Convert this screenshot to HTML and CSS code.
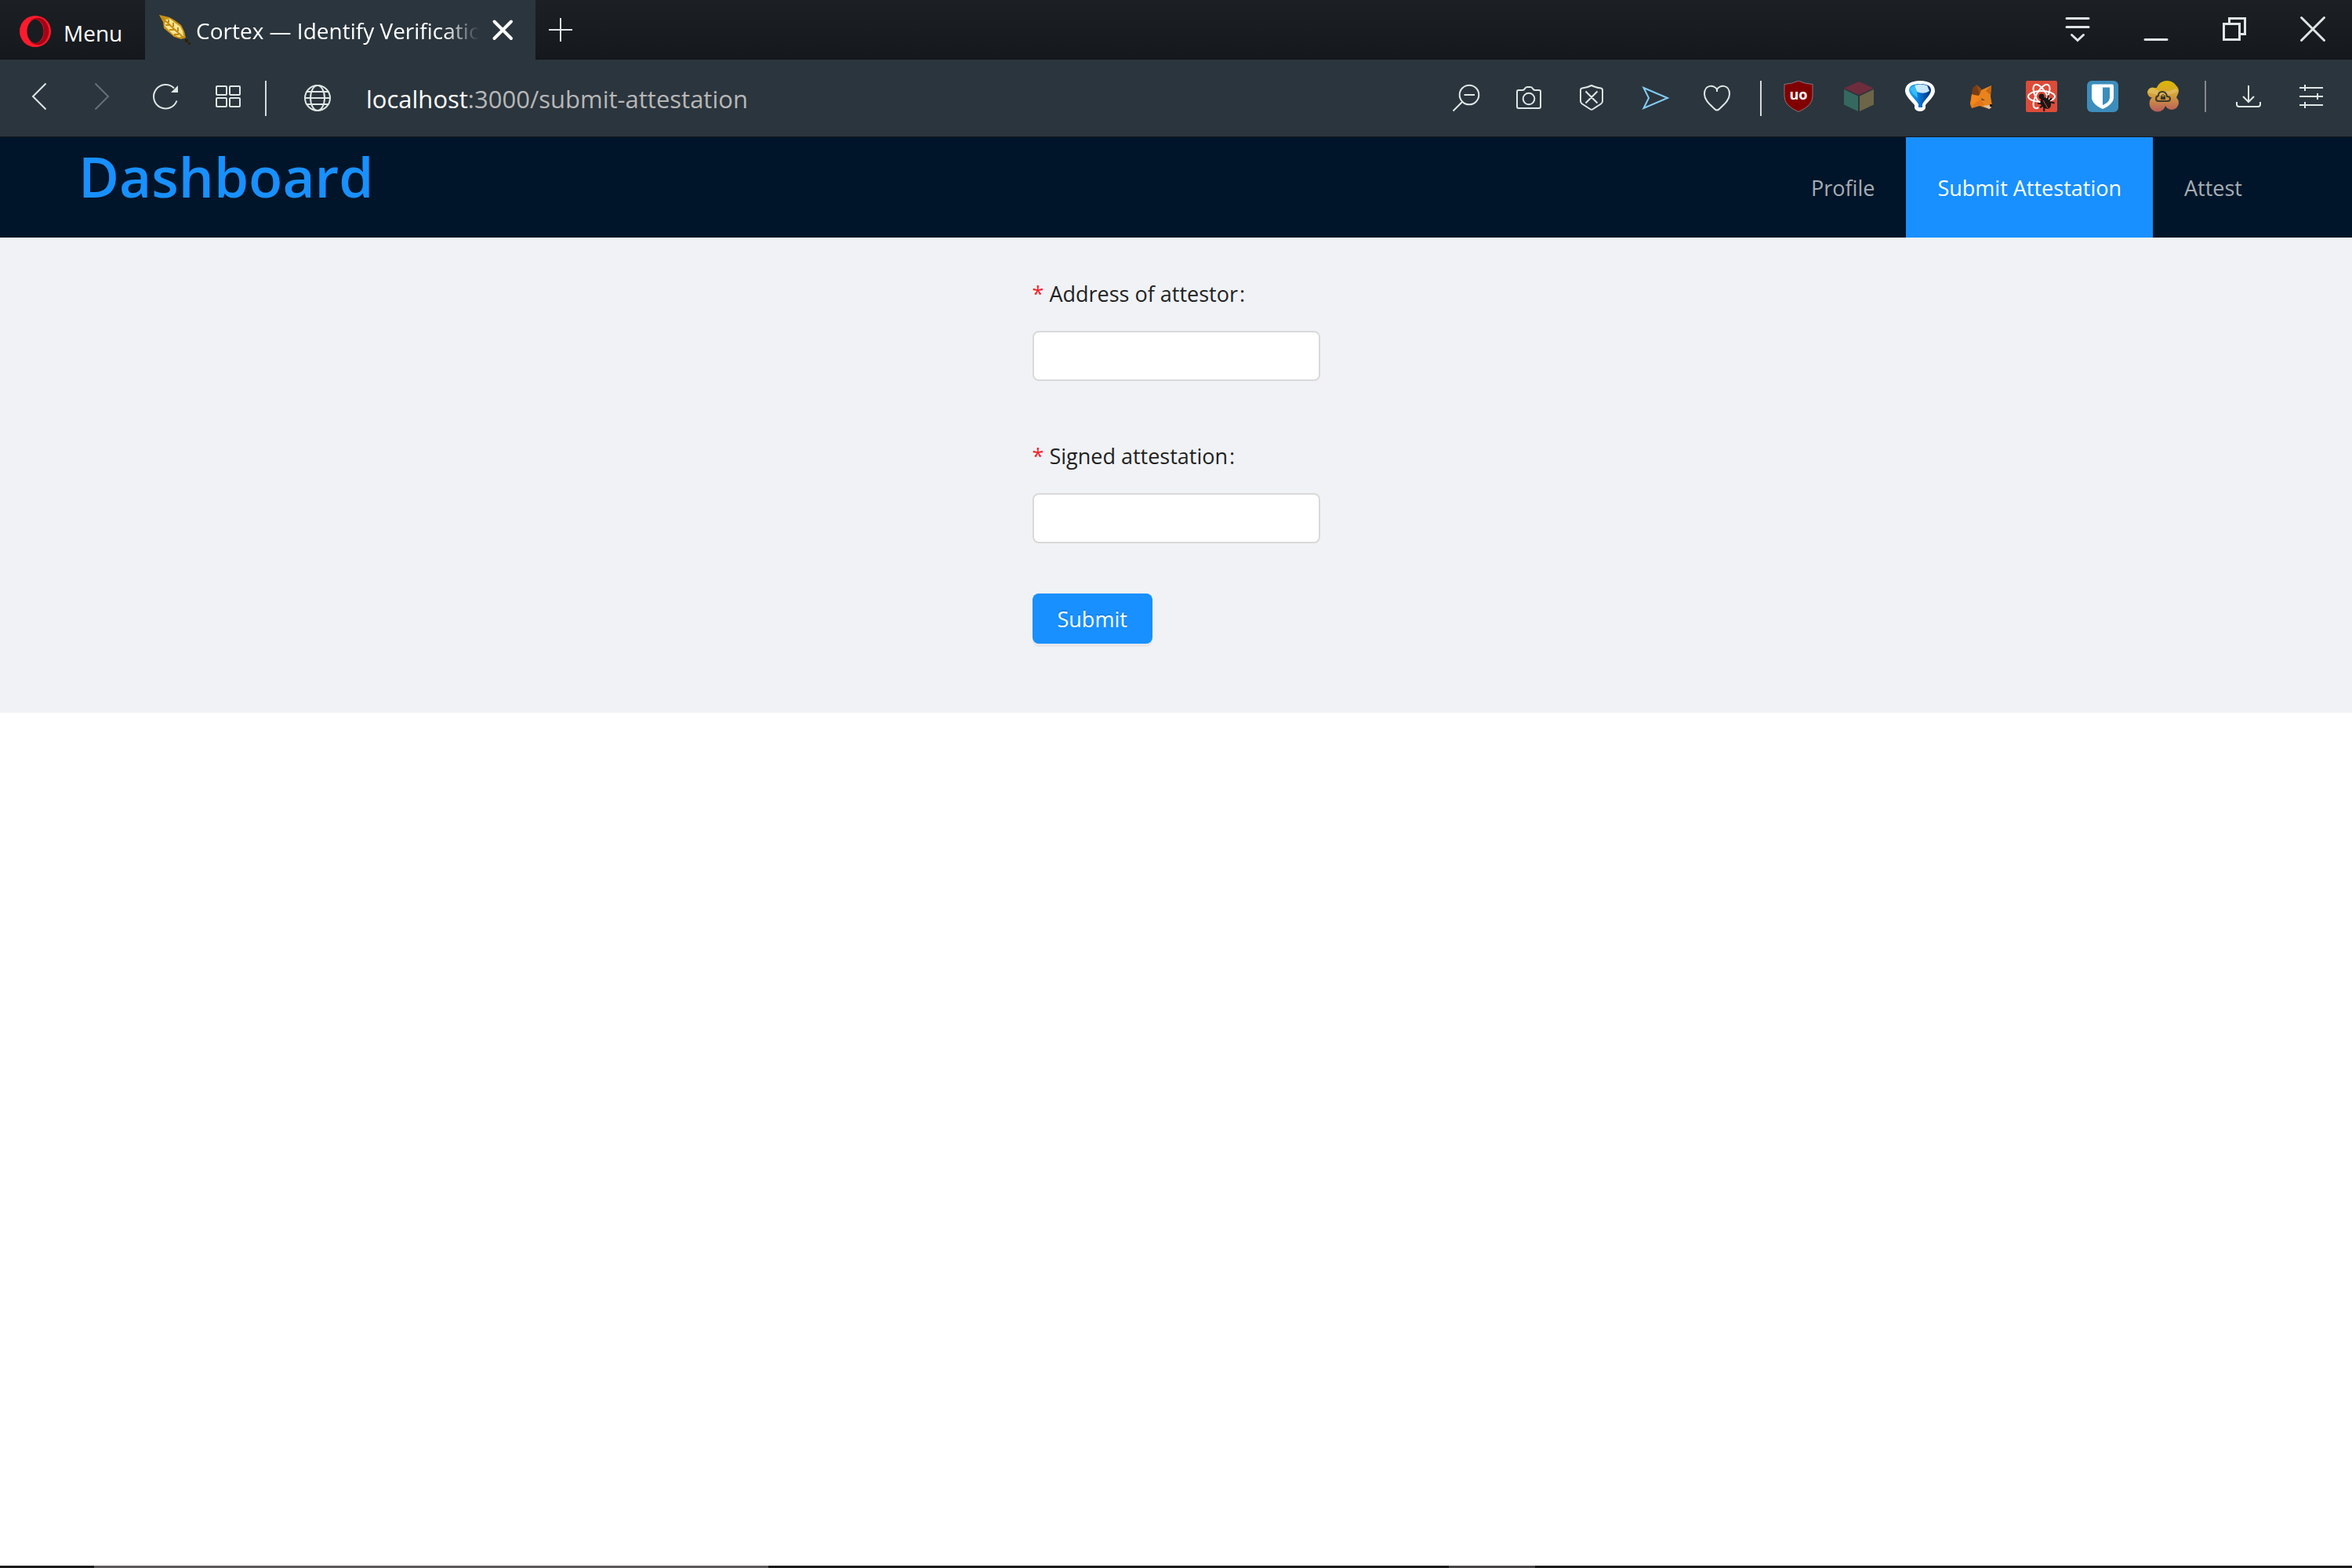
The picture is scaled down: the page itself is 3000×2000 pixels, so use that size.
FILE: index.html
```html
<!DOCTYPE html>
<html lang="en">
<head>
  <meta charset="UTF-8" />
  <meta name="viewport" content="width=device-width, initial-scale=1.0"/>
  <title>Cortex — Identify Verification</title>
  <link rel="stylesheet" href="styles.css">
</head>
<body>

  <!-- tabs -->
  <div class="tabbar">
    <button class="menu">
      <svg class="icon" viewBox="0 0 40 40"><circle cx="20" cy="20" r="20" fill="#ff1b2d"/><path d="M13 7C17 3 24 1 30 4.500A20 20 0 0 1 30 35.500C24 39 17 37 13 33C25 39 31 30 31 20S25 1 13 7Z" fill="#a70014"/><ellipse cx="20" cy="20" rx="10.500" ry="15" fill="#191c20"/></svg>
      <span>Menu</span>
    </button>
    <div class="tab">
      <svg class="icon" viewBox="0 0 40 40"><path d="M0 0L13 3L20 7L28 13L32 21L34 29L28 31L19 28L12 22L6 17L5 9Z" fill="#c99416"/><path d="M8 6L14 5L20 10L27 15L30 21L31 28L25 28L18 25L11 18L7 14Z" fill="#fbe591"/><path d="M2 2L32 30M12 10V6M18 15V10M24 21V16M13 13H8M19 19H13M25 25H19" stroke="#c08a14" stroke-width="2" fill="none"/><path d="M33 31h4v4h-4zM37 35h3v3h-3z" fill="#2b220c"/></svg>
      <span class="title">Cortex — Identify Verification</span>
      <button class="close" aria-label="Close tab"><svg class="icon" viewBox="0 0 40 40"><path d="M9.500 8.500L31 30M31 8.500L9.500 30" stroke-width="4" stroke-linecap="round"/></svg></button>
    </div>
    <button class="new" aria-label="New tab"><svg class="icon" viewBox="0 0 40 40"><path d="M20 3V33M5 18H35"/></svg></button>
    <div class="window">
      <button aria-label="Tab menu"><svg class="icon" viewBox="0 0 40 40"><path d="M6 4.500H34M6 15.500H34M12.500 25.500L20 32.500L27.500 25.500" stroke-width="3" stroke-linecap="round"/></svg></button>
      <button aria-label="Minimize"><svg class="icon" viewBox="0 0 40 40"><path d="M6 31.500H34" stroke-width="3" stroke-linecap="round"/></svg></button>
      <button aria-label="Restore"><svg class="icon" viewBox="0 0 40 40"><path d="M6.500 11.500H26.500V31.500H6.500ZM13.500 11V4.500H33.500V24.500H27" stroke-width="3"/></svg></button>
      <button aria-label="Close"><svg class="icon" viewBox="0 0 40 40"><path d="M5.500 3.500L34.500 32.500M34.500 3.500L5.500 32.500" stroke-width="3" stroke-linecap="round"/></svg></button>
    </div>
  </div>

  <!-- address bar -->
  <div class="toolbar">
    <div class="tools">
      <button aria-label="Back"><svg class="icon" viewBox="0 0 40 40"><path d="M28.500 3.500L12 20L28.500 36.500"/></svg></button>
      <button aria-label="Forward" class="off"><svg class="icon" viewBox="0 0 40 40"><path d="M11.500 3.500L28 20L11.500 36.500"/></svg></button>
      <button aria-label="Reload"><svg class="icon" viewBox="0 0 40 40"><path d="M35.500 25.500A15.200 15.200 0 1 1 32 9.500"/><path d="M37 6V15H28Z" fill="#dfe6e6" stroke="none"/></svg></button>
      <button aria-label="Speed dial"><svg class="icon" viewBox="0 0 40 40"><rect x="6" y="7" width="13" height="11" rx="1"/><rect x="23" y="7" width="13" height="11" rx="1"/><rect x="6" y="22" width="13" height="11" rx="1"/><rect x="23" y="22" width="13" height="11" rx="1"/></svg></button>
    </div>
    <div class="line"></div>
    <div class="address">
      <svg class="icon" viewBox="0 0 40 40"><circle cx="20" cy="22" r="16"/><ellipse cx="20" cy="22" rx="9" ry="16"/><path d="M6 14H34M4 22H36M6 30H34"/></svg>
      <div class="url">localhost<span>:3000/submit-attestation</span></div>
    </div>
    <div class="tools page">
      <button aria-label="Zoom out"><svg class="icon" viewBox="0 0 40 40"><circle cx="24" cy="18" r="12.300"/><path d="M17.500 18H31M15 27L3.500 38.500"/></svg></button>
      <button aria-label="Snapshot"><svg class="icon" viewBox="0 0 40 40"><path d="M5 14Q5 12 7 12H12Q14 12 15 10Q16 8 18 8H22Q24 8 25 10Q26 12 28 12H33Q35 12 35 14V33Q35 35 33 35H7Q5 35 5 33Z"/><circle cx="20" cy="23" r="7.300"/></svg></button>
      <button aria-label="Ad blocker"><svg class="icon" viewBox="0 0 40 40"><path d="M20 6Q26 9 32 9.500Q34 10 34 12V26Q34 28 32 29.500L22 36Q20 37.500 18 36L8 29.500Q6 28 6 26V12Q6 10 8 9.500Q14 9 20 6ZM12.500 13.500L27.500 28.500M27.500 13.500L12.500 28.500"/></svg></button>
      <button aria-label="My Flow" class="flow"><svg class="icon" viewBox="0 0 40 40"><path d="M6.500 9L37 22L6.500 35L13 22Z"/></svg></button>
      <button aria-label="Bookmark"><svg class="icon" viewBox="0 0 40 40"><path d="M20 14V11C17 5 4 4 4 17C4 25 12 31 17 36Q20 39 23 36C28 31 36 25 36 17C36 4 23 5 20 11"/></svg></button>
    </div>
    <div class="line"></div>
    <div class="extensions">
      <button aria-label="uBlock Origin"><svg class="icon" viewBox="0 0 40 40"><path d="M20 0Q28 4 38 4.500V20Q38 32 20 39.500Q2 32 2 20V4.500Q12 4 20 0Z" fill="#800000" stroke="#8b7378" stroke-width="1"/><text x="20" y="24" class="ublock">uo</text></svg></button>
      <button aria-label="Cube"><svg class="icon solid" viewBox="0 0 40 40"><path d="M20 1L39 9.500L20 18L1 9.500Z" fill="#6e2d3d"/><path d="M1 11L19 19.500V39L1 30.500Z" fill="#35695f"/><path d="M21 19.500L39 11V30.500L21 39Z" fill="#6d6548"/></svg></button>
      <button aria-label="VPN"><svg class="icon solid" viewBox="0 0 40 40"><defs><linearGradient id="cone"><stop offset="0" stop-color="#1fa8f5"/><stop offset=".35" stop-color="#0b86e8"/><stop offset="1" stop-color="#002d77"/></linearGradient></defs><path d="M20 0C32 0 39 5 39 13C39 19 31 26 27 31V35Q25 39 20 39Q15 39 13 35V31C9 26 1 19 1 13C1 5 8 0 20 0Z" fill="#fff"/><path d="M6 12C6 6 12 4 20 4S34 6 34 12C34 18 26 24 23 30V34H18V30C15 24 6 18 6 12Z" fill="url(#cone)"/><path d="M13 6Q20 3 29 6L32 13Q25 18 16 14Z" fill="#c9e8fc"/><path d="M7 10L13 6L16 14L17 22Q10 17 7 10Z" fill="#39bbf8"/></svg></button>
      <button aria-label="MetaMask"><svg class="icon solid" viewBox="0 0 40 40"><path d="M8 17L14 14L22 11L33 6L32 20L34 32L31 36L24 34L18 32L8 35L6 30Z" fill="#e8831d"/><path d="M8 17L9 9L14 5L20 12L17 19L11 18Z" fill="#763d16"/><path d="M14 5L20 10L18 17Z" fill="#9c4d14"/><path d="M33 6L26 13L32 18Z" fill="#c7650c"/><path d="M8 18L18 20L12 29L6 30Z" fill="#f6851b"/><path d="M12 29L20 24L24 32L18 31L8 35Z" fill="#e2761b"/><path d="M20 22L25 25L21 25Z" fill="#54443a"/><path d="M22 32L31 31L33 34L30 36Z" fill="#d7c1b3"/><path d="M31 30H34V33H31Z" fill="#161616"/></svg></button>
      <button aria-label="React Developer Tools"><svg class="icon" viewBox="0 0 40 40"><rect width="40" height="40" rx="2" fill="#dd4b39" stroke="none"/><g stroke="#fff"><ellipse cx="20" cy="20" rx="17" ry="7"/><ellipse cx="20" cy="20" rx="17" ry="7" transform="rotate(60 20 20)"/><ellipse cx="20" cy="20" rx="17" ry="7" transform="rotate(120 20 20)"/></g><path d="M15 31L31 26L34 36H17Z" fill="#dd4b39" stroke="none"/><g stroke="#1b1616" transform="rotate(-38 24 27)"><path d="M16 23L19 26H30L33 23M15 29H34M16 36L19 32H30L33 36"/><ellipse cx="24" cy="29" rx="5" ry="7" fill="#1b1616"/></g><circle cx="20" cy="20" r="3.500" fill="#1b1616" stroke="none"/><path d="M22 25L28 35" stroke="#dd4b39" stroke-width="1"/></svg></button>
      <button aria-label="Bitwarden"><svg class="icon solid" viewBox="0 0 40 40"><rect width="40" height="40" rx="6" fill="#3c8dbc"/><path d="M8 4.500H32Q34 4.500 34 6.500V21C34 28 27 33 20 36C13 33 6 28 6 21V6.500Q6 4.500 8 4.500Z" fill="#fff"/><path d="M20 8.500H29V21C29 26 25 29 20 31Z" fill="#3c8dbc"/></svg></button>
      <button aria-label="Cloud lock"><svg class="icon" viewBox="0 0 40 40"><defs><linearGradient id="cloud" x1="0" y1="0" x2="0" y2="40" gradientUnits="userSpaceOnUse"><stop offset="0" stop-color="#dcb800"/><stop offset=".45" stop-color="#d5a13b"/><stop offset="1" stop-color="#b75a5c"/></linearGradient></defs><g fill="url(#cloud)" stroke="none"><circle cx="25" cy="14" r="14"/><circle cx="6.500" cy="15" r="6.500"/><circle cx="13" cy="29" r="10.500"/><circle cx="31" cy="28" r="9"/><circle cx="32" cy="13" r="8"/><rect x="7" y="9" width="27" height="21"/></g><path d="M1 15Q20 22 39 14Q38 8 33 11Q20 18 7 9Q1 9 1 15Z" fill="#fff" opacity=".2" stroke="none"/><path d="M14 26H26Q29 26 29 23T25 20Q24 14 19 14T14 19Q11 20 11 23T14 26Z" stroke="#3b3a28"/><path d="M18 20V19Q20 16 22 19V20" stroke="#3b3a28" stroke-width="1"/><rect x="17" y="20" width="6" height="4" fill="#3b3a28" stroke="none"/></svg></button>
    </div>
    <div class="line short"></div>
    <div class="tools">
      <button aria-label="Downloads"><svg class="icon" viewBox="0 0 40 40"><path d="M20 6V26M13 20L20 27L27 20M5 27V30Q5 33 8 33H32Q35 33 35 30V27"/></svg></button>
      <button aria-label="Easy setup"><svg class="icon" viewBox="0 0 40 40"><path d="M5 9H35M5 20H35M5 31H35M12 5V13M28 16V24M12 27V35"/></svg></button>
    </div>
  </div>

  <!-- app -->
  <header class="header">
    <h1>Dashboard</h1>
    <nav class="nav">
      <a href="#profile">Profile</a>
      <a href="#submit" class="selected">Submit Attestation</a>
      <a href="#attest">Attest</a>
    </nav>
  </header>

  <main class="content">
    <form class="form">
      <label for="attestor">Address of attestor</label>
      <input type="text" id="attestor" />
      <label for="attestation">Signed attestation</label>
      <input type="text" id="attestation" />
      <button type="button" class="submit">Submit</button>
    </form>
  </main>

  <!-- top edge of the taskbar -->
  <footer class="taskbar">
    <div class="search"></div>
    <div class="running"></div>
  </footer>

</body>
</html>
```
FILE: styles.css
```css
* {
  box-sizing: border-box;
}

body {
  margin: 0;
  min-height: 100vh;
  display: flex;
  flex-direction: column;
  background-color: #fff;
  font-family: "Open Sans", "Noto Sans", sans-serif;
  font-size: 27px;
}

button {
  padding: 0;
  border: none;
  background: none;
  font: inherit;
  color: #fff;
  cursor: pointer;
}

.icon {
  display: block;
  flex: none;
  width: 40px;
  height: 40px;
  fill: none;
  stroke: #dfe6e6;
  stroke-width: 2;
}

.solid, .menu .icon, .tab > .icon {
  stroke: none;
}

.tabbar {
  display: flex;
  height: 76px;
  background: linear-gradient(#1c2024, #15181c);
  border-bottom: 1px solid #101316;
  font-size: 28px;
}

.menu {
  display: flex;
  align-items: center;
  gap: 16px;
  width: 185px;
  padding: 4px 0 0 25px;
}

.menu span {
  padding-top: 4px;
}

.tab {
  display: flex;
  align-items: center;
  width: 498px;
  height: 76px;
  padding: 2px 22px 0 18px;
  background-color: #2b353d;
  color: #fff;
}

.title {
  flex: 1;
  margin-left: 7px;
  overflow: hidden;
  white-space: nowrap;
  -webkit-mask-image: linear-gradient(90deg, #000 88%, transparent);
  mask-image: linear-gradient(90deg, #000 88%, transparent);
}

.close {
  margin-left: 10px;
}

.close .icon {
  stroke: #fff;
}

.new {
  width: 64px;
  padding: 4px 0 0 12px;
}

.window {
  display: flex;
  margin-left: auto;
  padding-top: 2px;
}

.window button {
  width: 100px;
}

.window .icon {
  margin: 0 auto;
}

.toolbar {
  display: flex;
  height: 99px;
  padding: 27px 12px 0 10px;
  background-color: #2b353d;
  border-bottom: 1px solid #14181b;
}

.tools {
  display: flex;
}

.tools.page {
  padding-right: 7px;
}

.tools button {
  width: 80px;
  height: 40px;
}

.tools .icon {
  margin: 0 auto;
}

.off .icon {
  stroke: #667077;
}

.flow .icon {
  stroke: #84ccf5;
}

.line {
  width: 2px;
  height: 45px;
  margin: 0 8px;
  background-color: #d5dada;
}

.line.short {
  height: 40px;
  margin: 0 14px;
  background-color: #84898c;
}

.address {
  flex: 1;
  display: flex;
  gap: 42px;
  padding-left: 37px;
}

.url {
  font-size: 31px;
  line-height: 46px;
  color: #fff;
}

.url span {
  color: #b7b7b7;
}

.extensions {
  display: flex;
  width: 543px;
  height: 40px;
}

.extensions button {
  flex: 1;
}

.extensions .icon {
  margin: 0 auto;
}

.ublock {
  font-size: 18px;
  font-weight: bold;
  fill: #fff;
  stroke: none;
  text-anchor: middle;
}

.header {
  display: flex;
  justify-content: space-between;
  height: 128px;
  padding: 0 100px;
  background-color: #001529;
}

h1 {
  margin: 0;
  font-size: 71px;
  line-height: 100px;
  font-weight: 600;
  color: #1890ff;
}

.nav {
  display: flex;
  height: 128px;
  line-height: 130px;
}

.nav a {
  padding: 0 40px;
  color: #a6adb4;
  text-decoration: none;
}

.nav .selected {
  background-color: #1890ff;
  color: #fff;
}

.content {
  padding: 40px 24px 88px;
  background-color: #f0f2f5;
}

.form {
  display: flex;
  flex-direction: column;
  width: 367px;
  margin: 0 auto;
}

label {
  line-height: 64px;
  margin-bottom: 15px;
  color: #222;
}

label::before {
  content: "*";
  margin-right: 7px;
  color: #f5222d;
}

label::after {
  content: ":";
  margin-left: 2px;
}

.form input {
  width: 100%;
  height: 64px;
  margin-bottom: 64px;
  padding: 8px 22px;
  border: 2px solid #d9d9d9;
  border-radius: 8px;
  background-color: #fff;
  font: inherit;
}

.submit {
  align-self: flex-start;
  height: 64px;
  padding: 0 32px;
  border-radius: 8px;
  background-color: #1890ff;
  box-shadow: 0 4px 0 rgba(0, 0, 0, 0.045);
  text-shadow: 0 -2px 0 rgba(0, 0, 0, 0.12);
}

.taskbar {
  display: flex;
  height: 3px;
  margin-top: auto;
  padding-left: 4%;
  background-color: #1b1b1b;
}

.search {
  width: 860px;
  background-color: #5c5a5a;
}

.running {
  width: 110px;
  margin-left: 868px;
  background-color: #484646;
}
```
